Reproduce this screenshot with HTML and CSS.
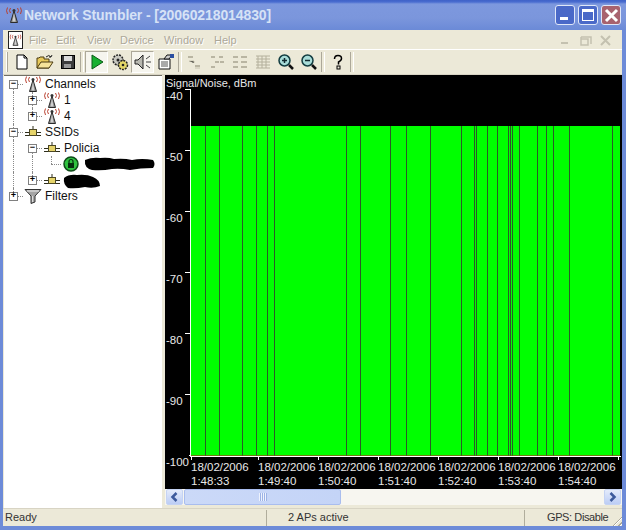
FILE: index.html
```html
<!DOCTYPE html>
<html lang="en">
<head>
  <meta charset="UTF-8" />
  <meta name="viewport" content="width=device-width, initial-scale=1.0" />
  <title>Network Stumbler</title>
  <link rel="stylesheet" href="styles.css">
</head>
<body>
  <svg class="defs" width="0" height="0">
    <symbol id="tower" viewBox="0 0 18 16">
      <path d="M9 4 L12.500 15.500 H5.500 Z" fill="#8c8c8c" stroke="#2b2b2b" stroke-width="1"/>
      <path d="M9 6 L10.500 14.500 H7.500 Z" fill="#cfcfcf"/>
      <circle cx="9" cy="3.500" r="1.500" fill="#333"/>
      <path d="M5.500 1 a4 4 0 0 0 0 5 M2.500 0.500 a6.500 6.500 0 0 0 0 6.500 M12.500 1 a4 4 0 0 1 0 5 M15.500 0.500 a6.500 6.500 0 0 1 0 6.500" fill="none" stroke="#b8402f" stroke-width="1"/>
    </symbol>
    <symbol id="net" viewBox="0 0 16 14">
      <path d="M0 7.500 H16 M0 10.500 H16 M8 1 V6" stroke="#2e2e1c" stroke-width="1" fill="none"/>
      <rect x="4.500" y="4.500" width="7" height="6" fill="#e6d46a" stroke="#4d4824"/>
    </symbol>
    <symbol id="funnel" viewBox="0 0 18 16">
      <path d="M1 1.500 H17 L11 8 V14 L7 15.500 V8 Z" fill="#a4a4a4" stroke="#333"/>
      <path d="M3 3 H15" stroke="#eee"/>
      <path d="M8.500 8 V14" stroke="#ddd"/>
    </symbol>
    <symbol id="tree-a" viewBox="0 0 16 16">
      <path d="M2 3 H7 M9 12 H14" stroke="#a8a490" stroke-width="1.500"/>
      <path d="M3 7 H8 V9 M9 14 H14" stroke="#c8c4b0"/>
    </symbol>
    <symbol id="tree-b" viewBox="0 0 16 16">
      <path d="M2 3 H6 M10 3 H14 M6 8 H10 M11 8 H15 M2 13 H6" stroke="#a8a490" stroke-width="1.500"/>
    </symbol>
    <symbol id="tree-c" viewBox="0 0 16 16">
      <path d="M1 3 H6 M9 3 H15 M1 8 H6 M9 8 H15 M1 13 H6 M9 13 H15" stroke="#a8a490" stroke-width="1.500"/>
    </symbol>
  </svg>

  <div class="window">
    <div class="titlebar">
      <svg class="title-icon"><use href="#tower"/></svg>
      <span class="title-text">Network Stumbler - [20060218014830]</span>
      <div class="title-buttons">
        <div class="tbtn tbtn-min"><span></span></div>
        <div class="tbtn tbtn-max"><span></span></div>
        <div class="tbtn tbtn-close">
          <svg width="15" height="15" viewBox="0 0 15 15"><path d="M2 2 L13 13 M13 2 L2 13" stroke="#fff" stroke-width="3"/></svg>
        </div>
      </div>
    </div>

    <div class="inner">
      <div class="menubar">
        <div class="doc-icon"><svg width="14" height="16"><use href="#tower"/></svg></div>
        <span class="menu-item menu-file">File</span>
        <span class="menu-item menu-edit">Edit</span>
        <span class="menu-item menu-view">View</span>
        <span class="menu-item menu-device">Device</span>
        <span class="menu-item menu-window">Window</span>
        <span class="menu-item">Help</span>
        <div class="mdi-buttons">
          <svg width="60" height="14" viewBox="0 0 60 14">
            <path d="M3 10 H10" stroke="#c4c1b0" stroke-width="2"/>
            <path d="M23 4 H33 V11 M23 4 V12 H30 V6 H23" fill="none" stroke="#c4c1b0" stroke-width="1.500"/>
            <path d="M43 3 L52 12 M52 3 L43 12" stroke="#c4c1b0" stroke-width="2"/>
          </svg>
        </div>
      </div>

      <div class="toolbar">
        <div class="grip"></div>
        <div class="tool">
          <svg width="16" height="16" viewBox="0 0 16 16"><path d="M3 1 H10 L13 4 V15 H3 Z" fill="#fff" stroke="#000"/><path d="M10 1 V4 H13" fill="none" stroke="#000"/></svg>
        </div>
        <div class="tool">
          <svg width="18" height="16" viewBox="0 0 18 16"><path d="M1 14 V4 H3 L4 3 H8 V5 H13 V14 Z" fill="#e8c95a" stroke="#4a3a10"/><path d="M1 14 L5 8 H17 L13 14 Z" fill="#f6e39a" stroke="#4a3a10"/><path d="M10 3 Q13 0 15 3 M15 3 L16 1 M15 3 L13 3" fill="none" stroke="#222"/></svg>
        </div>
        <div class="tool">
          <svg width="16" height="16" viewBox="0 0 16 16"><rect x="1.500" y="1.500" width="13" height="13" fill="#3c3c3c" stroke="#000"/><rect x="4" y="2" width="8" height="5" fill="#ddd"/><rect x="4" y="10" width="7" height="4" fill="#999"/></svg>
        </div>
        <div class="tool-sep"></div>
        <div class="tool tool-on">
          <svg width="14" height="16" viewBox="0 0 14 16"><path d="M2 1 L13 8 L2 15 Z" fill="#18b030" stroke="#0a5a16"/></svg>
        </div>
        <div class="tool">
          <svg width="18" height="18" viewBox="0 0 18 18"><circle cx="7" cy="7" r="5" fill="#c8c8c0" stroke="#222" stroke-width="1.500" stroke-dasharray="2 1"/><circle cx="7" cy="7" r="1.500" fill="#222"/><circle cx="12" cy="12" r="4.500" fill="#e4d868" stroke="#222" stroke-width="1.500" stroke-dasharray="2 1"/><circle cx="12" cy="12" r="1.300" fill="#222"/></svg>
        </div>
        <div class="tool tool-on">
          <svg width="18" height="16" viewBox="0 0 18 16"><path d="M1 6 H4 L9 1 V15 L4 10 H1 Z" fill="#b8b8b0" stroke="#222"/><path d="M12 8 H17 M12 5 L16 2 M12 11 L16 14" stroke="#444"/></svg>
        </div>
        <div class="tool">
          <svg width="18" height="18" viewBox="0 0 18 18"><path d="M2 6 H13 V16 H2 Z" fill="#fff" stroke="#111"/><path d="M4 9 H11 M4 11 H11 M4 13 H11" stroke="#555"/><path d="M7 6 L10 2 H15 L12 6 Z" fill="#ccc" stroke="#111"/><rect x="13" y="1" width="4" height="4" fill="#2a4ea0"/></svg>
        </div>
        <div class="tool-sep tool-sep-narrow"></div>
        <div class="tool"><svg width="16" height="16"><use href="#tree-a"/></svg></div>
        <div class="tool"><svg width="16" height="16"><use href="#tree-b"/></svg></div>
        <div class="tool"><svg width="16" height="16"><use href="#tree-c"/></svg></div>
        <div class="tool">
          <svg width="16" height="16" viewBox="0 0 16 16"><path d="M1 2 H15 M1 5 H15 M1 8 H15 M1 11 H15 M1 14 H15 M3 2 V14 M7 2 V14 M11 2 V14" stroke="#b4b09c"/></svg>
        </div>
        <div class="tool">
          <svg width="18" height="18" viewBox="0 0 18 18"><circle cx="7.500" cy="7.500" r="5.500" fill="#a8dcd8" stroke="#123c40" stroke-width="1.500"/><path d="M5 7.500 H10 M7.500 5 V10" stroke="#102a30" stroke-width="1.500"/><path d="M12 12 L16 16" stroke="#111" stroke-width="2.500"/></svg>
        </div>
        <div class="tool">
          <svg width="18" height="18" viewBox="0 0 18 18"><circle cx="7.500" cy="7.500" r="5.500" fill="#a8dcd8" stroke="#123c40" stroke-width="1.500"/><path d="M5 7.500 H10" stroke="#102a30" stroke-width="1.500"/><path d="M12 12 L16 16" stroke="#111" stroke-width="2.500"/></svg>
        </div>
        <div class="tool-sep"></div>
        <div class="tool">
          <svg width="12" height="16" viewBox="0 0 12 16"><path d="M2.500 5 Q2.500 1.500 6 1.500 Q9.500 1.500 9.500 4.500 Q9.500 6.500 6.500 8 V10.500" fill="none" stroke="#000" stroke-width="1.500"/><rect x="5" y="12" width="3" height="3" fill="none" stroke="#000"/></svg>
        </div>
        <div class="tool-sep"></div>
      </div>

      <div class="main">
        <div class="tree">
          <div class="row">
            <div class="cell line-down line-right"><span class="exp">&minus;</span></div>
            <div class="cell line-down"><svg class="tree-icon"><use href="#tower"/></svg></div>
            <span class="label">Channels</span>
          </div>
          <div class="row">
            <div class="cell line-full"></div>
            <div class="cell line-full line-right"><span class="exp">+</span></div>
            <div class="cell"><svg class="tree-icon"><use href="#tower"/></svg></div>
            <span class="label">1</span>
          </div>
          <div class="row">
            <div class="cell line-full"></div>
            <div class="cell line-up line-right"><span class="exp">+</span></div>
            <div class="cell"><svg class="tree-icon"><use href="#tower"/></svg></div>
            <span class="label">4</span>
          </div>
          <div class="row">
            <div class="cell line-full line-right"><span class="exp">&minus;</span></div>
            <div class="cell"><svg class="net-icon"><use href="#net"/></svg></div>
            <span class="label">SSIDs</span>
          </div>
          <div class="row">
            <div class="cell line-full"></div>
            <div class="cell line-down line-right"><span class="exp">&minus;</span></div>
            <div class="cell"><svg class="net-icon"><use href="#net"/></svg></div>
            <span class="label">Policia</span>
          </div>
          <div class="row">
            <div class="cell line-full"></div>
            <div class="cell line-full"></div>
            <div class="cell line-up line-right"></div>
            <div class="cell">
              <svg class="lock-icon" width="16" height="16" viewBox="0 0 16 16"><circle cx="8" cy="8" r="7" fill="#2fc23f" stroke="#0e4a18" stroke-width="1.500"/><rect x="5" y="7" width="6" height="5" fill="#06300e"/><path d="M6 7 V5.500 a2 2 0 0 1 4 0 V7" fill="none" stroke="#06300e" stroke-width="1.200"/></svg>
            </div>
            <svg class="blob-wide" width="72" height="14" viewBox="0 0 72 14"><path d="M1 3 Q8 0 16 1 Q24 0 30 2 Q40 1 48 3 Q58 1 69 3 Q72 7 69 11 Q56 11 46 13 Q36 11 28 12 Q18 14 8 13 Q0 11 1 3 Z" fill="#000"/></svg>
          </div>
          <div class="row">
            <div class="cell line-full"></div>
            <div class="cell line-up line-right"><span class="exp">+</span></div>
            <div class="cell"><svg class="net-icon"><use href="#net"/></svg></div>
            <svg class="blob-narrow" width="38" height="15" viewBox="0 0 38 15"><path d="M1 4 Q6 0 14 1 Q24 0 30 3 Q37 6 37 12 Q30 15 22 13 Q12 15 5 14 Q0 10 1 4 Z" fill="#000"/></svg>
          </div>
          <div class="row">
            <div class="cell line-up line-right"><span class="exp">+</span></div>
            <div class="cell"><svg class="tree-icon"><use href="#funnel"/></svg></div>
            <span class="label">Filters</span>
          </div>
        </div>

        <div class="splitter"></div>

        <div class="right-pane">
          <div class="chart">
            <div class="chart-title">Signal/Noise, dBm</div>
            <div class="chart-body">
              <div class="y-axis">
                <div class="y-label"><span>-40</span><i></i></div>
                <div class="y-label"><span>-50</span><i></i></div>
                <div class="y-label"><span>-60</span><i></i></div>
                <div class="y-label"><span>-70</span><i></i></div>
                <div class="y-label"><span>-80</span><i></i></div>
                <div class="y-label"><span>-90</span><i></i></div>
                <div class="y-label"><span>-100</span><i></i></div>
              </div>
              <div class="plot">
                <div class="bars">
                  <div class="bar" style="width:15px"></div>
                  <div class="bar" style="width:14px"></div>
                  <div class="bar" style="width:23px"></div>
                  <div class="bar" style="width:14px"></div>
                  <div class="bar" style="width:11px"></div>
                  <div class="bar" style="width:7px"></div>
                  <div class="bar" style="width:72px"></div>
                  <div class="bar" style="width:14px"></div>
                  <div class="bar" style="width:30px"></div>
                  <div class="bar" style="width:16px"></div>
                  <div class="bar" style="width:24px"></div>
                  <div class="bar" style="width:31px"></div>
                  <div class="bar" style="width:13px"></div>
                  <div class="bar" style="width:2px"></div>
                  <div class="bar" style="width:11px"></div>
                  <div class="bar" style="width:10px"></div>
                  <div class="bar" style="width:11px"></div>
                  <div class="bar" style="width:2px"></div>
                  <div class="bar" style="width:2px"></div>
                  <div class="bar" style="width:7px"></div>
                  <div class="bar" style="width:18px"></div>
                  <div class="bar" style="width:9px"></div>
                  <div class="bar" style="width:7px"></div>
                  <div class="bar" style="width:16px"></div>
                  <div class="bar" style="width:43px"></div>
                  <div class="bar bar-last" style="width:7px"></div>
                </div>
              </div>
            </div>
            <div class="x-axis">
              <div class="x-label x-first"><i></i>18/02/2006<br>1:48:33</div>
              <div class="x-label"><i></i>18/02/2006<br>1:49:40</div>
              <div class="x-label"><i></i>18/02/2006<br>1:50:40</div>
              <div class="x-label"><i></i>18/02/2006<br>1:51:40</div>
              <div class="x-label"><i></i>18/02/2006<br>1:52:40</div>
              <div class="x-label"><i></i>18/02/2006<br>1:53:40</div>
              <div class="x-label"><i></i>18/02/2006<br>1:54:40</div>
              <div class="x-label x-end"><i></i></div>
            </div>
          </div>

          <div class="scrollbar">
            <div class="sb-btn">
              <svg width="9" height="10" viewBox="0 0 9 10"><path d="M6.500 1 L2.500 5 L6.500 9" fill="none" stroke="#3d5a9c" stroke-width="2.500"/></svg>
            </div>
            <div class="sb-thumb"><span class="sb-grip"></span></div>
            <div class="sb-track"></div>
            <div class="sb-btn">
              <svg width="9" height="10" viewBox="0 0 9 10"><path d="M2.500 1 L6.500 5 L2.500 9" fill="none" stroke="#3d5a9c" stroke-width="2.500"/></svg>
            </div>
          </div>
        </div>
      </div>

      <div class="statusbar">
        <div class="status-cell status-ready">Ready</div>
        <div class="status-cell status-aps">2 APs active</div>
        <div class="status-cell status-gps">GPS: Disable</div>
        <div class="resize-grip"></div>
      </div>
    </div>
  </div>
</body>
</html>
```

FILE: styles.css
```css
* {
  box-sizing: border-box;
}
html, body {
  margin: 0;
  padding: 0;
}
body {
  width: 626px;
  height: 530px;
  overflow: hidden;
  font-family: "Liberation Sans", Arial, sans-serif;
  font-size: 12px;
  color: #222;
}
.defs {
  display: block;
  height: 0;
}
.window {
  width: 626px;
  height: 530px;
  display: flex;
  flex-direction: column;
  background: #6d8bd8;
  padding: 0 4px 4px 3px;
}

/* title bar */
.titlebar {
  height: 30px;
  margin: 0 -4px 0 -3px;
  padding: 0 5px 0 5px;
  display: flex;
  align-items: center;
  flex-shrink: 0;
  background: linear-gradient(#3f62c8 0, #4a6dd0 2px, #7d98de 4px, #7b96dc 18px, #6b8ad7 30px);
}
.title-icon {
  width: 18px;
  height: 20px;
  flex-shrink: 0;
}
.title-text {
  margin-left: 1px;
  font-size: 14px;
  font-weight: bold;
  letter-spacing: -0.1px;
  color: #d6e2f6;
  white-space: nowrap;
}
.title-buttons {
  margin-left: auto;
  display: flex;
  gap: 3px;
}
.tbtn {
  width: 20px;
  height: 20px;
  border: 1px solid #dfe7f8;
  border-radius: 3px;
  background: #4a69c8;
  display: flex;
  align-items: center;
  justify-content: center;
}
.tbtn-min span {
  width: 8px;
  height: 3px;
  background: #fff;
  margin-top: 7px;
  margin-right: 3px;
}
.tbtn-max span {
  width: 12px;
  height: 12px;
  border: 1px solid #fff;
  border-top-width: 3px;
}
.tbtn-close {
  background: #a8626e;
}

.inner {
  flex: 1;
  min-height: 0;
  display: flex;
  flex-direction: column;
  background: #ece9d8;
}

/* menu */
.menubar {
  height: 20px;
  display: flex;
  align-items: center;
  flex-shrink: 0;
  padding-left: 5px;
  border-bottom: 1px solid #fff;
}
.doc-icon {
  width: 15px;
  height: 18px;
  border: 1px solid #222;
  background: #fff;
  display: flex;
  align-items: center;
  justify-content: center;
  overflow: hidden;
}
.menu-item {
  color: #aca899;
  text-shadow: 1px 1px 0 #fff;
  font-size: 11px;
}
.menu-file { margin-left: 6px; width: 27px; }
.menu-edit { width: 31px; }
.menu-view { width: 33px; }
.menu-device { width: 44px; }
.menu-window { width: 50px; }
.mdi-buttons {
  margin-left: auto;
  margin-right: 4px;
  display: flex;
}

/* toolbar */
.toolbar {
  height: 25px;
  display: flex;
  align-items: center;
  flex-shrink: 0;
  padding-left: 3px;
  border-bottom: 1px solid #d8d4c4;
}
.grip {
  width: 2px;
  height: 20px;
  margin-right: 2px;
  border-left: 1px solid #fff;
  border-right: 1px solid #aca899;
}
.tool {
  width: 23px;
  height: 22px;
  flex-shrink: 0;
  display: flex;
  align-items: center;
  justify-content: center;
}
.tool-on {
  background: #f6f5ee;
  border: 1px solid;
  border-color: #aca899 #fff #fff #aca899;
}
.tool-sep {
  width: 6px;
  height: 20px;
  flex-shrink: 0;
  display: flex;
  justify-content: center;
}
.tool-sep::before {
  content: "";
  width: 2px;
  height: 20px;
  border-left: 1px solid #aca899;
  border-right: 1px solid #fff;
}
.tool-sep-narrow {
  width: 5px;
}

/* main area */
.main {
  flex: 1;
  min-height: 0;
  display: flex;
}
.tree {
  width: 158px;
  margin-left: 1px;
  background: #fff;
  border-top: 1px solid #716f64;
  flex-shrink: 0;
  color: #111;
  overflow: hidden;
}
.row {
  height: 16px;
  display: flex;
  align-items: center;
}
.cell {
  width: 19px;
  height: 16px;
  flex-shrink: 0;
  position: relative;
  display: flex;
  align-items: center;
  justify-content: center;
}
.line-full::before,
.line-up::before,
.line-down::before {
  content: "";
  position: absolute;
  left: 9px;
  width: 0;
  border-left: 1px dotted #8a8a8a;
}
.line-full::before { top: 0; bottom: 0; }
.line-up::before { top: 0; height: 8px; }
.line-down::before { top: 8px; bottom: 0; }
.line-right::after {
  content: "";
  position: absolute;
  left: 9px;
  right: 0;
  top: 8px;
  border-top: 1px dotted #8a8a8a;
}
.exp {
  position: relative;
  z-index: 1;
  width: 9px;
  height: 9px;
  border: 1px solid #808080;
  background: #fff;
  font: bold 9px/7px "Liberation Mono", monospace;
  text-align: center;
  color: #000;
}
.tree-icon {
  position: relative;
  z-index: 1;
  width: 18px;
  height: 16px;
  flex-shrink: 0;
}
.net-icon {
  width: 16px;
  height: 14px;
  position: relative;
  z-index: 1;
}
.lock-icon {
  flex-shrink: 0;
}
.label {
  margin-left: 3px;
  font-size: 12px;
  white-space: nowrap;
}
.blob-wide {
  margin-left: 4px;
  flex-shrink: 0;
}
.blob-narrow {
  flex-shrink: 0;
  margin-left: 2px;
  margin-top: 2px;
}
.splitter {
  width: 3px;
  flex-shrink: 0;
}

/* chart */
.right-pane {
  flex: 1;
  min-width: 0;
  display: flex;
  flex-direction: column;
}
.chart {
  height: 414px;
  flex-shrink: 0;
  background: #000;
  color: #e8e8e8;
  font-size: 11.500px;
  overflow: hidden;
}
.chart-title {
  height: 14px;
  padding: 2px 0 0 1px;
  line-height: 13px;
  font-size: 11px;
}
.chart-body {
  height: 368px;
  display: flex;
}
.y-axis {
  width: 25px;
  flex-shrink: 0;
}
.y-label {
  height: 61px;
  padding-left: 1px;
  display: flex;
  justify-content: space-between;
}
.y-label span {
  line-height: 13px;
  margin-top: 1px;
}
.y-label i {
  width: 5px;
  height: 1px;
  background: #fff;
}
.plot {
  width: 431px;
  height: 368px;
  padding-top: 37px;
  border-left: 1px solid #fff;
}
.bars {
  height: 331px;
  display: flex;
  border-bottom: 1px solid #fff;
}
.bar {
  height: 330px;
  flex-shrink: 0;
  background: #00ff00;
  border-right: 1px solid #2c5a28;
  border-bottom: 1px solid #6f7a10;
}
.bar-last {
  border-right: none;
}
.x-axis {
  margin-left: 26px;
  display: flex;
  line-height: 14px;
}
.x-label {
  width: 60px;
  flex-shrink: 0;
  white-space: nowrap;
}
.x-first {
  width: 67px;
}
.x-end {
  width: 2px;
}
.x-label i {
  display: block;
  width: 1px;
  height: 3px;
  background: #fff;
}

/* scrollbar */
.scrollbar {
  height: 16px;
  flex-shrink: 0;
  display: flex;
  padding-left: 1px;
  padding-right: 1px;
  background: #f7f6f0;
}
.sb-btn {
  width: 17px;
  flex-shrink: 0;
  border: 1px solid #c5d3f3;
  border-radius: 2px;
  background: linear-gradient(#e4ebfb, #bccdf5);
  display: flex;
  align-items: center;
  justify-content: center;
}
.sb-thumb {
  width: 157px;
  margin-left: 1px;
  border: 1px solid #a9bdee;
  border-radius: 2px;
  background: linear-gradient(90deg, #cbd9f8, #c4d4f7);
  display: flex;
  align-items: center;
  justify-content: center;
}
.sb-grip {
  width: 8px;
  height: 8px;
  background: repeating-linear-gradient(90deg, #eef3fd 0 1px, #9db3e6 1px 2px);
}
.sb-track {
  flex: 1;
}

/* status bar */
.statusbar {
  height: 18px;
  flex-shrink: 0;
  display: flex;
  position: relative;
  font-size: 11px;
  color: #333;
  border-top: 1px solid #d8d4c4;
  padding-top: 1px;
}
.status-cell {
  line-height: 15px;
  border-right: 1px solid #b0ad9c;
  white-space: nowrap;
}
.status-ready {
  width: 264px;
  padding-left: 2px;
}
.status-aps {
  width: 258px;
  padding-left: 21px;
}
.status-gps {
  padding-left: 22px;
  border-right: none;
  letter-spacing: -0.4px;
}
.resize-grip {
  position: absolute;
  right: 0;
  bottom: 0;
  width: 12px;
  height: 12px;
  background: repeating-linear-gradient(135deg, transparent 0 2px, #aca899 2px 3px, #fff 3px 4px);
  clip-path: polygon(100% 0, 100% 100%, 0 100%);
}
```
